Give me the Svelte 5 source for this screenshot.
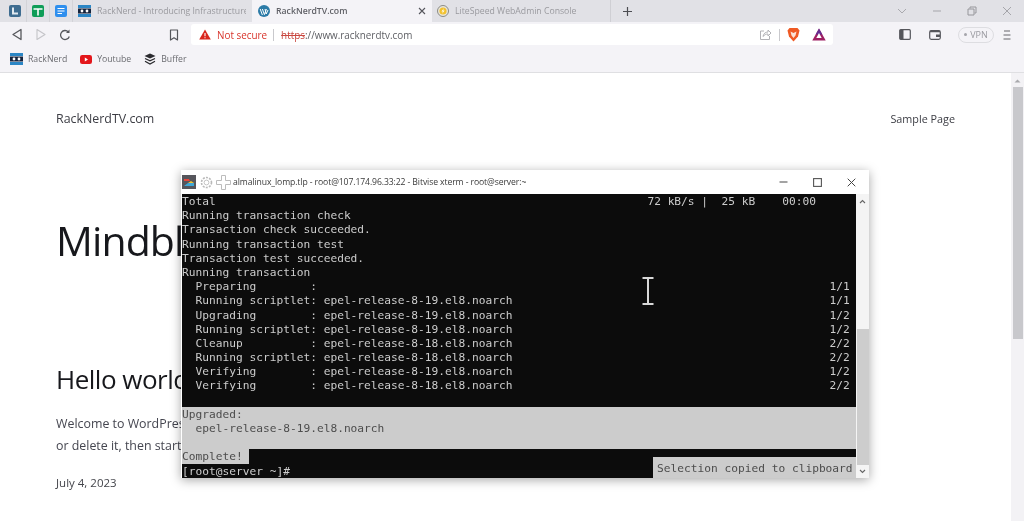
<script>
  const pad = (s, n) => s.padEnd(n, ' ');

  const lines = [
    { text: pad('Total', 69) + '72 kB/s |  25 kB    00:00' },
    { text: 'Running transaction check' },
    { text: 'Transaction check succeeded.' },
    { text: 'Running transaction test' },
    { text: 'Transaction test succeeded.' },
    { text: 'Running transaction' },
    { text: pad('  Preparing        :', 96) + '1/1' },
    { text: pad('  Running scriptlet: epel-release-8-19.el8.noarch', 96) + '1/1' },
    { text: pad('  Upgrading        : epel-release-8-19.el8.noarch', 96) + '1/2' },
    { text: pad('  Running scriptlet: epel-release-8-19.el8.noarch', 96) + '1/2' },
    { text: pad('  Cleanup          : epel-release-8-18.el8.noarch', 96) + '2/2' },
    { text: pad('  Running scriptlet: epel-release-8-18.el8.noarch', 96) + '2/2' },
    { text: pad('  Verifying        : epel-release-8-19.el8.noarch', 96) + '1/2' },
    { text: pad('  Verifying        : epel-release-8-18.el8.noarch', 96) + '2/2' },
    { text: ' ' },
    { text: 'Upgraded:', selected: true },
    { text: '  epel-release-8-19.el8.noarch', selected: true },
    { text: ' ', selected: true },
    { text: 'Complete!', partial: true },
    { text: '[root@server ~]#' }
  ];
</script>

<div class="screen">
  <div class="tabbar">
    <div class="pinned">
      <svg width="12" height="12" viewBox="0 0 12 12"><rect width="12" height="12" rx="2" fill="#3e6c90"/><path d="M4 2.500v6h5" fill="none" stroke="#dfe8ef" stroke-width="2"/></svg>
    </div>
    <div class="pinned">
      <svg width="12" height="12" viewBox="0 0 12 12"><rect width="12" height="12" rx="2" fill="#0f9d58"/><path d="M1.500 4h9M6 4v6.500" fill="none" stroke="#fff" stroke-width="1.600"/></svg>
    </div>
    <div class="pinned">
      <svg width="12" height="12" viewBox="0 0 12 12"><rect width="12" height="12" rx="2" fill="#2f8fee"/><path d="M2.500 3.500h7M2.500 6h7M2.500 8.500h4.500" fill="none" stroke="#fff" stroke-width="1.200"/></svg>
    </div>
    <div class="tab first">
      <svg width="13" height="12" viewBox="0 0 13 12"><rect width="13" height="3" fill="#2b86c5"/><rect y="3.500" width="13" height="5" fill="#14233c"/><rect y="9" width="13" height="3" fill="#2b86c5"/><circle cx="4" cy="6" r="1.400" fill="#fff"/><circle cx="9" cy="6" r="1.400" fill="#fff"/></svg>
      <span class="tab-title clip">RackNerd - Introducing Infrastructure</span>
    </div>
    <div class="tab active">
      <svg width="12" height="12" viewBox="0 0 12 12"><circle cx="6" cy="6" r="6" fill="#2c7ba7"/><path d="M2.200 4l2.200 6M4.400 4l2 5.600L8.400 4M7 4l1.200 5L10 5" fill="none" stroke="#fff" stroke-width="1"/></svg>
      <span class="tab-title strong">RackNerdTV.com</span>
      <svg class="close" width="8" height="8" viewBox="0 0 8 8"><path d="M1 1l6 6M7 1l-6 6" stroke="#55565c" stroke-width="1.100"/></svg>
    </div>
    <div class="tab last">
      <svg width="12" height="12" viewBox="0 0 12 12"><circle cx="6" cy="6" r="5.500" fill="#e9e6da" stroke="#8b8b86"/><circle cx="6" cy="6" r="3.600" fill="#f2c230"/><path d="M7 3L4.500 6.400H6L5 9l2.600-3.600H6z" fill="#fff"/></svg>
      <span class="tab-title">LiteSpeed WebAdmin Console</span>
    </div>
    <svg class="plus" width="11" height="11" viewBox="0 0 11 11"><path d="M5.500 1v9M1 5.500h9" stroke="#4c4d52" stroke-width="1.200"/></svg>
    <div class="win-controls">
      <svg width="10" height="6" viewBox="0 0 10 6"><path d="M1 1l4 4 4-4" fill="none" stroke="#a9a9ae"/></svg>
      <svg width="10" height="2" viewBox="0 0 10 2"><path d="M1 1h8" stroke="#a5a5aa"/></svg>
      <svg width="10" height="10" viewBox="0 0 10 10"><path d="M3 2.500V1h6v6H7.500M1 3h6v6H1z" fill="none" stroke="#96969b"/></svg>
      <svg width="10" height="10" viewBox="0 0 10 10"><path d="M1 1l8 8M9 1L1 9" stroke="#a5a5aa"/></svg>
    </div>
  </div>

  <div class="toolbar">
    <div class="nav">
      <svg width="12" height="13" viewBox="0 0 12 13"><path d="M10 1.500v10L2 6.500z" fill="none" stroke="#55565b" stroke-width="1.300" stroke-linejoin="round"/></svg>
      <svg width="12" height="13" viewBox="0 0 12 13"><path d="M2 1.500v10l8-5z" fill="none" stroke="#c4c4c8" stroke-width="1.100" stroke-linejoin="round"/></svg>
      <svg width="12" height="12" viewBox="0 0 12 12"><path d="M10.300 7.500A4.500 4.500 0 1 1 9.300 2.900" fill="none" stroke="#55565b" stroke-width="1.300"/><path d="M10.500 0.500v3.500H7z" fill="#55565b"/></svg>
    </div>
    <svg class="bookmark" width="10" height="12" viewBox="0 0 10 12"><path d="M1.500 1h7v10L5 8.800 1.500 11z" fill="none" stroke="#55565b" stroke-width="1.200" stroke-linejoin="round"/></svg>
    <div class="urlbar">
      <svg width="12" height="11" viewBox="0 0 12 11"><path d="M6 0.500L11.800 10.500H0.200z" fill="#d9261c"/><path d="M6 4v3.200M6 8.200v1" stroke="#fff" stroke-width="1.100"/></svg>
      <span class="not-secure">Not secure</span>
      <span class="url-sep"></span>
      <span class="url"><span class="https">https</span>://www.racknerdtv.com</span>
      <svg class="share" width="13" height="13" viewBox="0 0 13 13"><path d="M5 3H1.500v8.500h9V8" fill="none" stroke="#b2b2b6"/><path d="M4 8.500C4.500 5.500 6.500 4 9 4V2l3 3-3 3V6C7 6 5.500 6.800 4 8.500z" fill="none" stroke="#b2b2b6"/></svg>
      <span class="url-sep light"></span>
      <svg width="13" height="15" viewBox="0 0 13 15"><path d="M2.500 1h8l2 2.500-1.500 6L6.500 14.500 2 9.500 0.500 3.500z" fill="#ef5a24"/><path d="M3.500 4.500L6.500 6l3-1.500L8.500 8.500l-2 2.500-2-2.500z" fill="#fbe3d6"/></svg>
      <svg class="bat" width="14" height="13" viewBox="0 0 14 13"><path d="M7 0.500L13.700 12.500H0.300z" fill="#9e1f63"/><path d="M7 0.500L10.400 6.500H3.600z" fill="#662d91"/><path d="M7 5L9.700 10H4.300z" fill="#fff"/></svg>
    </div>
    <div class="tools">
      <svg width="12" height="11" viewBox="0 0 12 11"><rect x="0.700" y="0.700" width="10.600" height="9.600" rx="1" fill="none" stroke="#55565b" stroke-width="1.200"/><rect x="1" y="1" width="3.500" height="9" fill="#55565b"/></svg>
      <svg class="wallet" width="12" height="11" viewBox="0 0 12 11"><rect x="0.700" y="1.700" width="10.600" height="8.600" rx="1.500" fill="none" stroke="#55565b" stroke-width="1.200"/><path d="M1 2.500h10" stroke="#55565b" stroke-width="1.500"/><rect x="7" y="5.500" width="4" height="2.500" fill="#55565b"/></svg>
      <div class="vpn"><span class="dot"></span>VPN</div>
      <svg class="menu" width="10" height="10" viewBox="0 0 10 10"><path d="M2 1h6M1.500 5h7M1.500 9h7" stroke="#66676c" stroke-width="1.200"/></svg>
    </div>
  </div>

  <div class="bookmarks">
    <div class="bm">
      <svg width="13" height="12" viewBox="0 0 13 12"><rect width="13" height="3" fill="#2b86c5"/><rect y="3.500" width="13" height="5" fill="#14233c"/><rect y="9" width="13" height="3" fill="#2b86c5"/><circle cx="4" cy="6" r="1.400" fill="#fff"/><circle cx="9" cy="6" r="1.400" fill="#fff"/></svg>
      <span>RackNerd</span>
    </div>
    <div class="bm">
      <svg width="12" height="9" viewBox="0 0 12 9"><rect width="12" height="9" rx="2.200" fill="#e3161b"/><path d="M4.800 2.500v4L8 4.500z" fill="#fff"/></svg>
      <span>Youtube</span>
    </div>
    <div class="bm">
      <svg width="12" height="12" viewBox="0 0 12 12"><path d="M6 0.500l5.500 2.500L6 5.500 0.500 3z" fill="#2b2b2f"/><path d="M1 5.500L6 7.800l5-2.300M1 8.300l5 2.700 5-2.700" fill="none" stroke="#2b2b2f" stroke-width="1.300"/></svg>
      <span>Buffer</span>
    </div>
  </div>

  <div class="page">
    <div class="content">
      <header class="site-header">
        <span>RackNerdTV.com</span>
        <span class="nav-link">Sample Page</span>
      </header>
      <h1>Mindblown: a blog about philosophy.</h1>
      <h2>Hello world!</h2>
      <p>Welcome to WordPress. This is your first post. Edit<br />or delete it, then start writing!</p>
      <div class="date">July 4, 2023</div>
    </div>

    <div class="page-scroll">
      <svg width="7" height="4" viewBox="0 0 7 4"><path d="M3.500 0.500L6.500 3.500H0.500z" fill="#a9a9ad"/></svg>
      <div class="page-thumb"></div>
    </div>

    <div class="xterm">
      <div class="xterm-title">
        <svg width="14" height="14" viewBox="0 0 14 14"><rect width="14" height="14" fill="#56565c"/><path d="M2 4h5l1 2H2z" fill="#e8463c"/><path d="M2 11l4-3h6v3z" fill="#3fa7d6"/><path d="M6 8l3-2 3 2z" fill="#f2c230"/></svg>
        <svg class="gear" width="13" height="13" viewBox="0 0 13 13"><circle cx="6.500" cy="6.500" r="5" fill="none" stroke="#b9b9b9" stroke-width="1.600" stroke-dasharray="2 1.200"/><circle cx="6.500" cy="6.500" r="2.400" fill="none" stroke="#c4c4c4"/></svg>
        <svg class="cross" width="15" height="15" viewBox="0 0 15 15"><path d="M5.500 0.500h4v5h5v4h-5v5h-4v-5h-5v-4h5z" fill="none" stroke="#bcbcbc"/></svg>
        <span class="xterm-name">almalinux_lomp.tlp - root@107.174.96.33:22 - Bitvise xterm - root@server:~</span>
        <div class="xterm-controls">
          <svg width="9" height="2" viewBox="0 0 9 2"><path d="M0.500 1h8" stroke="#666" stroke-width="1.200"/></svg>
          <svg width="9" height="9" viewBox="0 0 9 9"><rect x="0.600" y="0.600" width="7.800" height="7.800" fill="none" stroke="#555" stroke-width="1.100"/></svg>
          <svg width="9" height="9" viewBox="0 0 9 9"><path d="M0.700 0.700l7.600 7.600M8.300 0.700L0.700 8.300" stroke="#444" stroke-width="1"/></svg>
        </div>
      </div>
      <div class="xterm-body">
        <div class="term">
          {#each lines as line}
            <div class="row" class:selected={line.selected}><span class:partial={line.partial}>{line.text}</span></div>
          {/each}
          <div class="toast">Selection copied to clipboard</div>
          <svg class="ibeam" width="12" height="28" viewBox="0 0 12 28"><path d="M0.500 1h11M0.500 27h11M6 1v26" fill="none" stroke="#d8d8d8" stroke-width="2"/></svg>
        </div>
        <div class="term-scroll">
          <svg width="7" height="5" viewBox="0 0 7 5"><path d="M1 4l2.500-2.500L6 4" fill="none" stroke="#666" stroke-width="1.100"/></svg>
          <div class="term-thumb"></div>
          <svg width="7" height="5" viewBox="0 0 7 5"><path d="M1 1l2.500 2.500L6 1" fill="none" stroke="#666" stroke-width="1.100"/></svg>
        </div>
      </div>
    </div>
  </div>
</div>

<style>
  :global(body) {
    margin: 0;
    background: #fff;
  }

  .screen {
    width: 1024px;
    height: 521px;
    overflow: hidden;
    display: flex;
    flex-direction: column;
    font-family: "Open Sans", "Noto Sans", sans-serif;
    filter: blur(0.35px);
  }

  .tabbar {
    height: 22px;
    flex: none;
    background: #e1e1e6;
    display: flex;
    align-items: center;
    font-size: 8.700px;
    color: #9a9a9f;
  }

  .pinned {
    width: 23px;
    height: 22px;
    display: flex;
    align-items: center;
    justify-content: center;
    flex: none;
    box-shadow: 1px 0 0 #d3d3d8;
  }

  .pinned:first-child {
    width: 26px;
    padding-left: 3px;
    box-sizing: border-box;
  }

  .tab {
    display: flex;
    align-items: center;
    height: 22px;
    flex: none;
    box-sizing: border-box;
    gap: 6px;
  }

  .tab.first {
    width: 180px;
    padding-left: 6px;
  }

  .tab.active {
    width: 180px;
    padding-left: 6px;
    background: #f4f3f7;
    color: #56575c;
  }

  .tab.last {
    width: 178px;
    padding-left: 5px;
    box-shadow: 1px 0 0 #cfcfd4;
  }

  .tab-title {
    white-space: nowrap;
  }

  .clip {
    width: 149px;
    overflow: hidden;
  }

  .strong {
    font-weight: 600;
    color: #606167;
  }

  .close {
    margin-left: auto;
    margin-right: 6px;
  }

  .plus {
    margin-left: 12px;
  }

  .win-controls {
    margin-left: auto;
    display: flex;
    align-items: center;
    gap: 25px;
    padding-right: 12px;
  }

  .toolbar {
    height: 26px;
    flex: none;
    box-sizing: border-box;
    padding-bottom: 1px;
    background: #f4f3f7;
    display: flex;
    align-items: center;
  }

  .nav {
    display: flex;
    align-items: center;
    gap: 12px;
    padding-left: 11px;
  }

  .bookmark {
    margin-left: 98px;
  }

  .urlbar {
    width: 642px;
    height: 21px;
    margin-left: 12px;
    padding: 0 7px 0 8px;
    box-sizing: border-box;
    background: #fff;
    border-radius: 3px;
    display: flex;
    align-items: center;
    font-size: 9.900px;
  }

  .not-secure {
    color: #d8342b;
    margin-left: 6px;
  }

  .url-sep {
    width: 1px;
    height: 12px;
    background: #c9c9cd;
    margin: 0 7px 0 6px;
  }

  .url-sep.light {
    margin: 0 7px;
  }

  .url {
    color: #5f6065;
  }

  .https {
    color: #c9473f;
    text-decoration: line-through;
  }

  .share {
    margin-left: auto;
  }

  .bat {
    margin-left: 12px;
  }

  .tools {
    display: flex;
    align-items: center;
    margin-left: 66px;
  }

  .wallet {
    margin-left: 18px;
  }

  .vpn {
    width: 36px;
    height: 16px;
    margin-left: 17px;
    box-sizing: border-box;
    border: 1px solid #dddde1;
    border-radius: 8px;
    display: flex;
    align-items: center;
    justify-content: center;
    gap: 3px;
    font-size: 9px;
    color: #9a9aa0;
  }

  .dot {
    width: 3px;
    height: 3px;
    border-radius: 50%;
    background: #a5a5ab;
  }

  .menu {
    margin-left: 8px;
  }

  .bookmarks {
    height: 25px;
    flex: none;
    box-sizing: border-box;
    background: #f4f3f7;
    border-bottom: 1px solid #dfdfe2;
    display: flex;
    align-items: center;
    gap: 13px;
    padding: 0 0 2px 10px;
    font-size: 8.700px;
    color: #6a6b70;
  }

  .bm {
    display: flex;
    align-items: center;
    gap: 5px;
  }

  .page {
    flex: 1;
    position: relative;
    background: #fff;
    overflow: hidden;
  }

  .content {
    padding: 0 69px 0 56px;
    color: #2a2b30;
  }

  .site-header {
    display: flex;
    justify-content: space-between;
    align-items: center;
    padding-top: 36px;
    font-size: 12.400px;
    line-height: 19px;
    color: #3c3d44;
  }

  .nav-link {
    font-size: 10.800px;
  }

  h1 {
    margin: 83px 0 0;
    font-size: 41px;
    line-height: 58px;
    font-weight: 400;
    letter-spacing: -0.9px;
    white-space: nowrap;
    color: #17181c;
  }

  h2 {
    margin: 92px 0 0;
    font-size: 26px;
    line-height: 36px;
    font-weight: 400;
    letter-spacing: -0.5px;
    color: #17181c;
  }

  p {
    margin: 16px 0 0;
    font-size: 12.400px;
    line-height: 22px;
    color: #44454f;
  }

  .date {
    margin-top: 16px;
    font-size: 11.500px;
    line-height: 20px;
    color: #44454b;
  }

  .page-scroll {
    position: absolute;
    top: 0;
    right: 0;
    bottom: 0;
    width: 13px;
    background: #f3f2f5;
    display: flex;
    flex-direction: column;
    align-items: center;
    padding-top: 6px;
    box-sizing: border-box;
  }

  .page-thumb {
    width: 10px;
    height: 252px;
    margin-top: 4px;
    background: #c8c8cc;
  }

  .xterm {
    position: absolute;
    left: 181px;
    top: 97px;
    width: 688px;
    height: 308px;
    background: #fff;
    box-shadow: 0 2px 10px rgba(0, 0, 0, 0.35);
    display: flex;
    flex-direction: column;
  }

  .xterm-title {
    height: 24px;
    flex: none;
    display: flex;
    align-items: center;
    padding-left: 1px;
  }

  .gear {
    margin-left: 4px;
  }

  .cross {
    margin-left: 3px;
  }

  .xterm-name {
    margin-left: 2px;
    font-size: 8.650px;
    letter-spacing: -0.1px;
    color: #3a3a3a;
    white-space: nowrap;
  }

  .xterm-controls {
    margin-left: auto;
    display: flex;
    align-items: center;
    gap: 25px;
    padding-right: 13px;
  }

  .xterm-body {
    flex: 1;
    display: flex;
    padding-left: 1px;
    min-height: 0;
  }

  .term {
    position: relative;
    width: 674px;
    background: #0c0c0c;
    overflow: hidden;
  }

  .row {
    height: 14.200px;
    line-height: 16.200px;
    font-family: "DejaVu Sans Mono", "Liberation Mono", monospace;
    font-size: 11.210px;
    color: #cccccc;
    white-space: pre;
  }

  .row.selected {
    background: #cccccc;
    color: #4d4d4d;
  }

  .partial {
    display: inline-block;
    height: 14.200px;
    background: #cccccc;
    color: #4d4d4d;
    padding-right: 6px;
  }

  .toast {
    position: absolute;
    right: 0;
    bottom: 0;
    width: 203px;
    height: 21px;
    box-sizing: border-box;
    padding-left: 4px;
    background: #cccccc;
    color: #4d4d4d;
    font-family: "DejaVu Sans Mono", "Liberation Mono", monospace;
    font-size: 11.210px;
    line-height: 23px;
    white-space: pre;
  }

  .ibeam {
    position: absolute;
    left: 460px;
    top: 83px;
  }

  .term-scroll {
    width: 13px;
    background: #f4f4f4;
    display: flex;
    flex-direction: column;
    align-items: center;
    padding-top: 5px;
    padding-bottom: 4px;
    box-sizing: border-box;
  }

  .term-thumb {
    width: 12px;
    margin-top: auto;
    margin-bottom: 4px;
    height: 136px;
    background: #cdcdcd;
  }
</style>
